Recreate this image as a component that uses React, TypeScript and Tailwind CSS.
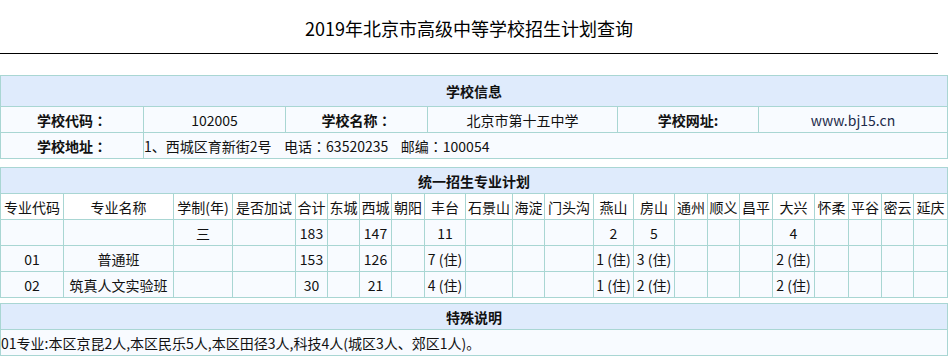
import React from "react";

const font = { fontFamily: '"Noto Sans CJK SC", "Microsoft YaHei", sans-serif' };

const cell = "border-r border-b border-[#a9d6d3] flex items-center text-[14px] leading-none whitespace-nowrap overflow-hidden";

const C = () => <span className="font-['Noto_Sans_CJK_TC',sans-serif]">：</span>;

const t2cols = [63, 110, 59, 63, 32, 32, 32, 33, 41, 47, 32, 49, 40, 41, 33, 32, 33, 42, 34, 33, 32, 34];
const t2head = ["专业代码", "专业名称", "学制(年)", "是否加试", "合计", "东城", "西城", "朝阳", "丰台", "石景山", "海淀", "门头沟", "燕山", "房山", "通州", "顺义", "昌平", "大兴", "怀柔", "平谷", "密云", "延庆"];
const blank = (n: number) => Array.from({ length: n }, () => "");
const rows: string[][] = [
  ["", "", "三", "", "183", "", "147", "", "11", "", "", "", "2", "5", "", "", "", "4", ...blank(4)],
  ["01", "普通班", "", "", "153", "", "126", "", "7 (住)", "", "", "", "1 (住)", "3 (住)", "", "", "", "2 (住)", ...blank(4)],
  ["02", "筑真人文实验班", "", "", "30", "", "21", "", "4 (住)", "", "", "", "1 (住)", "2 (住)", "", "", "", "2 (住)", ...blank(4)],
];

export default function App() {
  return (
    <div className="w-[948px] h-[356px] bg-white text-[#111] overflow-hidden" style={font}>
      <div className="h-[54px] w-[938px] border-b border-black flex items-center justify-center pt-[3px]">
        <span className="text-[18px] text-black">2019年北京市高级中等学校招生计划查询</span>
      </div>

      {/* 学校信息 */}
      <div className="mt-[21px] border-t border-l border-[#a9d6d3] grid grid-cols-[143px_142px_142px_190px_141px_189px]">
        <div className={`${cell} col-span-6 h-[31px] justify-center font-bold bg-[#dfebfc]`}>学校信息</div>
        <div className={`${cell} h-[26px] justify-center font-bold bg-[#f8fbff]`}>学校代码<C /></div>
        <div className={`${cell} h-[26px] justify-center bg-[#f8fbff]`}>102005</div>
        <div className={`${cell} h-[26px] justify-center font-bold bg-[#f8fbff]`}>学校名称<C /></div>
        <div className={`${cell} h-[26px] justify-center bg-[#f8fbff]`}>北京市第十五中学</div>
        <div className={`${cell} h-[26px] justify-center font-bold bg-[#f8fbff]`}>学校网址:</div>
        <div className={`${cell} h-[26px] justify-center bg-[#f8fbff] text-[#1c2a4a]`}>www.bj15.cn</div>
        <div className={`${cell} h-[26px] justify-center font-bold bg-[#f8fbff]`}>学校地址<C /></div>
        <div className={`${cell} col-span-5 h-[26px] justify-start bg-[#f8fbff]`}>
          1、西城区育新街2号&nbsp;&nbsp;&nbsp;&nbsp;电话<C />63520235&nbsp;&nbsp;&nbsp;&nbsp;邮编<C />100054
        </div>
      </div>

      {/* 统一招生专业计划 */}
      <div
        className="mt-[8px] border-t border-l border-[#a9d6d3] grid"
        style={{ gridTemplateColumns: t2cols.map((w) => `${w}px`).join(" ") }}
      >
        <div className={`${cell} h-[26px] justify-center font-bold bg-[#dfebfc]`} style={{ gridColumn: "1 / -1" }}>
          统一招生专业计划
        </div>
        {t2head.map((h, i) => (
          <div key={`h${i}`} className={`${cell} h-[26px] justify-center bg-white`}>
            {h}
          </div>
        ))}
        {rows.map((r, ri) =>
          r.map((v, ci) => (
            <div key={`r${ri}c${ci}`} className={`${cell} h-[26px] justify-center bg-[#f8fbff]`}>
              {v}
            </div>
          ))
        )}
      </div>

      {/* 特殊说明 */}
      <div className="mt-[5px] border-t border-l border-[#a9d6d3] flex flex-col">
        <div className={`${cell} h-[26px] justify-center font-bold bg-[#dfebfc]`}>特殊说明</div>
        <div className={`${cell} h-[26px] justify-start bg-[#f8fbff]`}>
          01专业:本区京昆2人,本区民乐5人,本区田径3人,科技4人(城区3人、郊区1人)。
        </div>
      </div>
    </div>
  );
}
